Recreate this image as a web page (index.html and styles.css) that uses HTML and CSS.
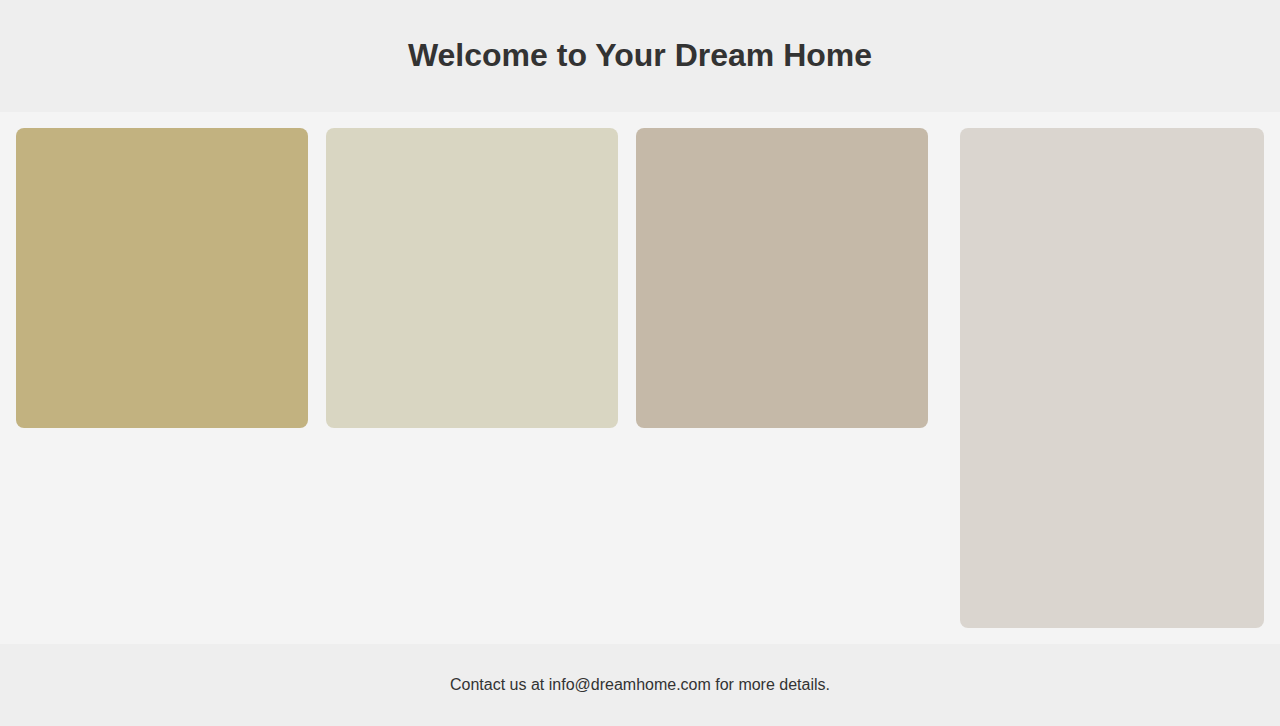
FILE: index.html
```html
<!DOCTYPE html>
<html lang="en">
<head>
<meta charset="utf-8">
<title>Dream Home</title>
<link rel="stylesheet" href="styles.css">
</head>
<body>
<header class="site-header">
  <h1 class="title">Welcome to Your Dream Home</h1>
</header>
<main class="content">
  <section class="gallery">
    <div class="card card-sand"></div>
    <div class="card card-cream"></div>
    <div class="card card-taupe"></div>
  </section>
  <aside class="sidebar"></aside>
</main>
<footer class="site-footer">
  <p class="contact">Contact us at info@dreamhome.com for more details.</p>
</footer>
</body>
</html>
```

FILE: styles.css
```css
* { box-sizing: border-box; }
html, body { margin: 0; padding: 0; }
body {
  font-family: "Liberation Sans", Arial, sans-serif;
  color: #333333;
  background: #f4f4f4;
}
.site-header {
  background: #eeeeee;
  padding: 16px;
  text-align: center;
}
.title {
  margin: 21.44px 0;
  font-size: 32px;
  font-weight: bold;
  line-height: 37px;
}
.content {
  display: flex;
  gap: 32px;
  padding: 16px;
  background: #f4f4f4;
  align-items: flex-start;
}
.gallery {
  display: flex;
  gap: 18px;
  width: 912px;
}
.card {
  width: 292px;
  height: 300px;
  border-radius: 8px;
}
.card-sand { background: #c2b280; }
.card-cream { background: #d9d6c2; }
.card-taupe { background: #c5b9a8; }
.sidebar {
  width: 304px;
  height: 500px;
  border-radius: 8px;
  background: #dad5cf;
}
.site-footer {
  background: #eeeeee;
  padding: 16px;
  text-align: center;
}
.contact {
  margin: 16px 0;
  font-size: 16px;
  line-height: 18px;
}
```
